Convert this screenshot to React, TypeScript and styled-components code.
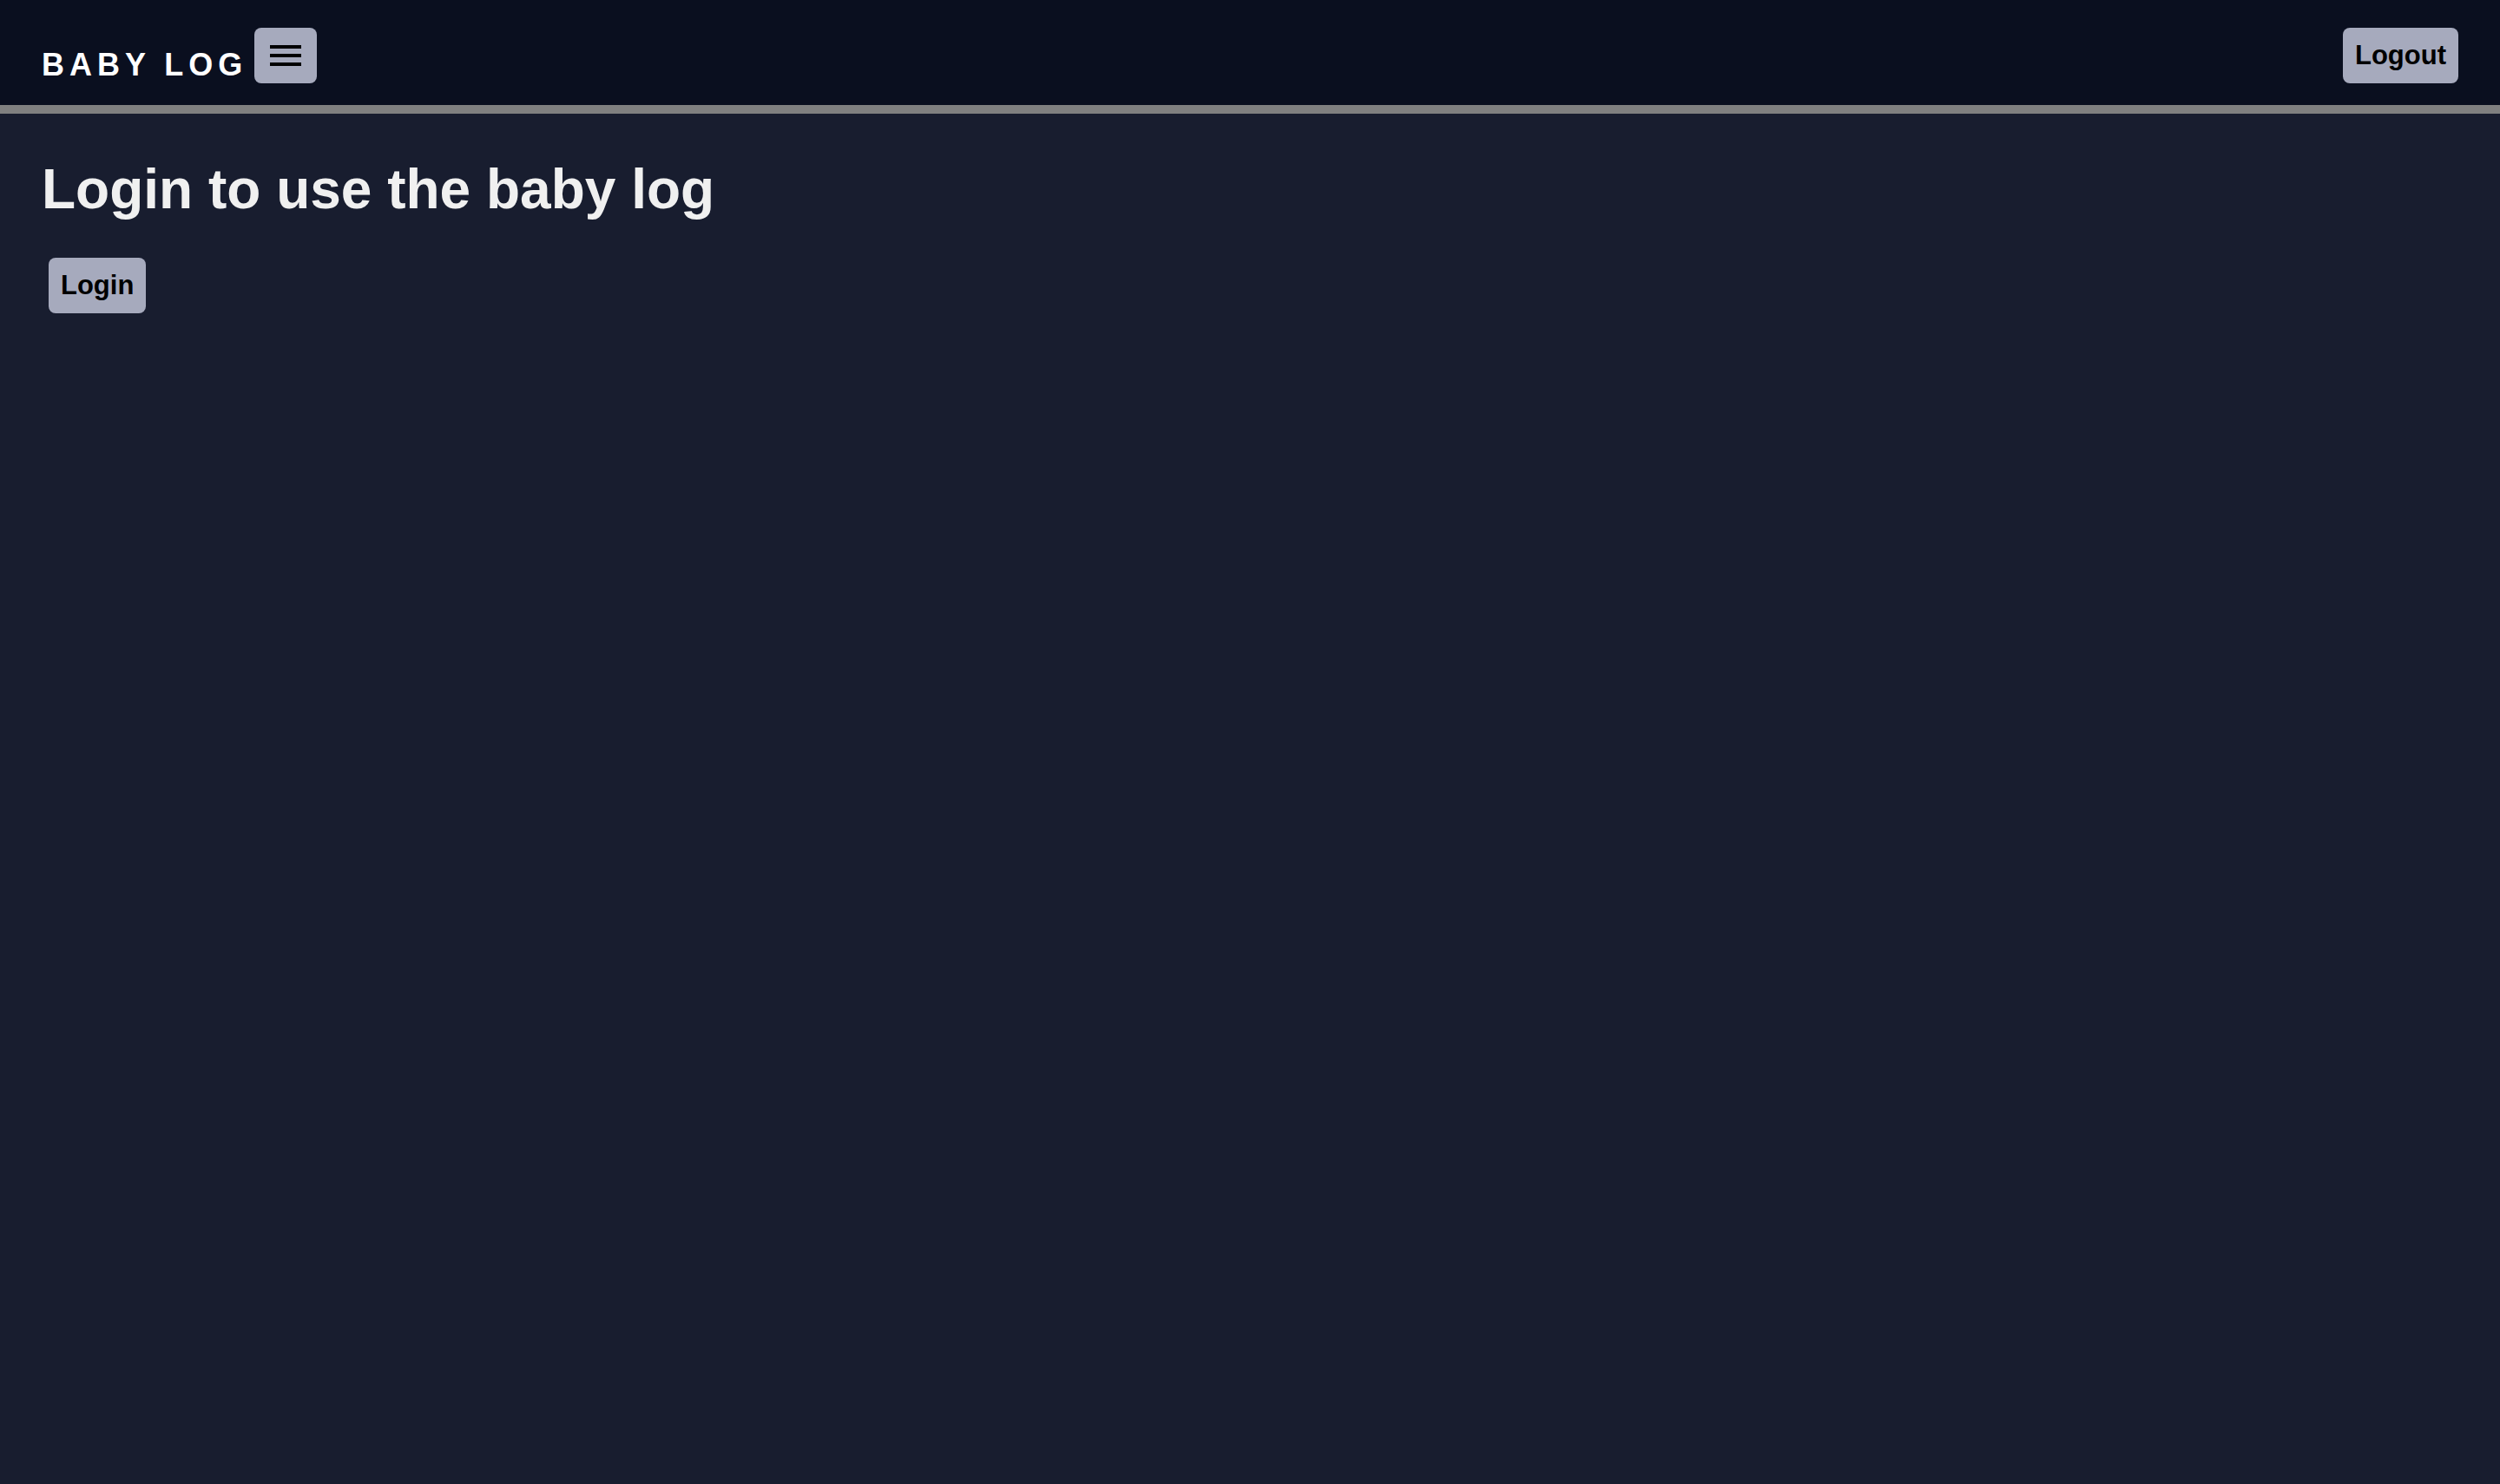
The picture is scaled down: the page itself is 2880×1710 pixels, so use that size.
import styled, { createGlobalStyle } from "styled-components";

const GlobalStyle = createGlobalStyle`
  html, body {
    margin: 0;
    padding: 0;
    background: #181d2f;
    font-family: "Liberation Sans", Arial, sans-serif;
    min-height: 100%;
  }
  #root {
    min-height: 100vh;
  }
`;

const Page = styled.div`
  min-height: 100vh;
  background: #181d2f;
  color: #f0f0f0;
`;

const Header = styled.header`
  display: flex;
  align-items: flex-end;
  justify-content: space-between;
  padding: 32px 48px 25px 48px;
  background: #0a0f1f;
  border-bottom: 10px solid #808080;
`;

const Brand = styled.div`
  display: flex;
  align-items: flex-end;
  gap: 8px;
`;

const Title = styled.span`
  font-size: 36px;
  font-weight: 700;
  letter-spacing: 6px;
  color: #ffffff;
  text-transform: uppercase;
`;

const Button = styled.button<{ $icon?: boolean }>`
  display: inline-flex;
  align-items: center;
  justify-content: center;
  height: 64px;
  padding: 0 ${(p) => (p.$icon ? "0" : "14px")};
  width: ${(p) => (p.$icon ? "72px" : "auto")};
  background: #a6aabd;
  color: #000;
  border: none;
  border-radius: 8px;
  font-family: "Liberation Sans", Arial, sans-serif;
  font-size: 31px;
  font-weight: 700;
  line-height: 36px;
  cursor: pointer;
`;

const Main = styled.main`
  padding: 50px 48px;
`;

const Heading = styled.h1`
  margin: 0 0 42px 0;
  font-size: 64px;
  font-weight: 700;
  color: #f0f0f0;
`;

const LoginButton = styled(Button)`
  margin-left: 8px;
`;

function MenuIcon() {
  return (
    <svg width="36" height="24" viewBox="0 0 36 24">
      <rect x="0" y="0" width="36" height="4" fill="#000" />
      <rect x="0" y="10" width="36" height="4" fill="#000" />
      <rect x="0" y="20" width="36" height="4" fill="#000" />
    </svg>
  );
}

export default function App() {
  return (
    <Page>
      <GlobalStyle />
      <Header>
        <Brand>
          <Title>Baby Log</Title>
          <Button $icon aria-label="Menu">
            <MenuIcon />
          </Button>
        </Brand>
        <Button>Logout</Button>
      </Header>
      <Main>
        <Heading>Login to use the baby log</Heading>
        <LoginButton>Login</LoginButton>
      </Main>
    </Page>
  );
}
